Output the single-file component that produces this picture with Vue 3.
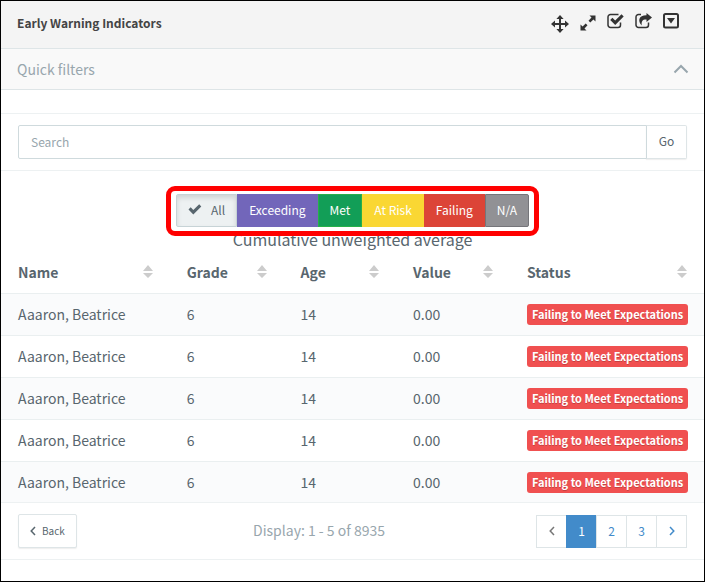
<script setup>
import { ref } from 'vue'

const query = ref('')
const active = ref('All')
const page = ref(1)

const filters = [
  { label: 'All', kind: 'all' },
  { label: 'Exceeding', kind: 'exceeding' },
  { label: 'Met', kind: 'met' },
  { label: 'At Risk', kind: 'risk' },
  { label: 'Failing', kind: 'failing' },
  { label: 'N/A', kind: 'na' }
]
const columns = ['Name', 'Grade', 'Age', 'Value', 'Status']
const rows = Array.from({ length: 5 }, (_, id) => ({
  id,
  name: 'Aaaron, Beatrice',
  grade: '6',
  age: '14',
  value: '0.00',
  status: 'Failing to Meet Expectations'
}))
</script>

<template>
  <main class="widget">
    <header class="title-bar">
      <h1>Early Warning Indicators</h1>
      <div class="tools">
        <button type="button" class="tool low" aria-label="Move">
          <svg width="18" height="18" viewBox="0 0 18 18"><path d="M9 0l3.600 4H10v4h4V5.400L18 9l-4 3.600V10h-4v4h2.600L9 18l-3.600-4H8v-4H4v2.600L0 9l4-3.600V8h4V4H5.400z" /></svg>
        </button>
        <button type="button" class="tool low" aria-label="Expand">
          <svg width="16" height="16" viewBox="0 0 16 16"><path d="M9.500 0.500H15.500V6.500L13.400 4.500 10.300 7.500 8.500 5.700 11.500 2.600zM0.500 9.500L2.600 11.500 5.700 8.500 7.500 10.300 4.500 13.400 6.500 15.500H0.500z" /></svg>
        </button>
        <button type="button" class="tool" aria-label="Select">
          <svg width="17" height="16" viewBox="0 0 17 16"><path class="line" d="M13.500 9.500v2.500a2.500 2.500 0 0 1-2.500 2.500H3.500A2.500 2.500 0 0 1 1 12V4a2.500 2.500 0 0 1 2.500-2.500H11.500" /><path d="M3.200 6.900l2.200-2.200 2.800 2.800 6.300-6.300 2.200 2.200-8.500 8.500z" /></svg>
        </button>
        <button type="button" class="tool" aria-label="Share">
          <svg width="17" height="16" viewBox="0 0 17 16"><path class="line" d="M13.500 9.500v2.500a2.500 2.500 0 0 1-2.500 2.500H3.500A2.500 2.500 0 0 1 1 12V4a2.500 2.500 0 0 1 2.500-2.500H6" /><path d="M11.500 0L17 4.500 11.500 9V6.500C7.500 6.300 6.300 8 6.700 12.500 2.500 8 3.500 2.300 11.500 2.300z" /></svg>
        </button>
        <button type="button" class="tool" aria-label="Menu">
          <svg width="16" height="16" viewBox="0 0 16 16"><rect class="frame" x="1" y="1" width="14" height="13.500" rx="1.500" /><path d="M4 5h8l-4 5.500z" /></svg>
        </button>
      </div>
    </header>

    <button type="button" class="quick" aria-expanded="true">
      <span>Quick filters</span>
      <svg width="16" height="10" viewBox="0 0 16 10"><path d="M1.500 8.500L8 2l6.500 6.500" /></svg>
    </button>

    <form class="search" @submit.prevent>
      <input v-model="query" type="text" placeholder="Search" aria-label="Search" />
      <button type="submit">Go</button>
    </form>

    <section class="filters">
      <div class="highlight" role="group" aria-label="Status filter">
        <button
          v-for="f in filters"
          :key="f.kind"
          type="button"
          :class="['filter', f.kind]"
          :aria-pressed="active === f.label"
          @click="active = f.label"
        >
          <svg v-if="active === f.label" width="14" height="11" viewBox="0 0 14 11"><path d="M0.500 5.500L2.700 3.300 5.300 5.900 11.200 0.300 13.300 2.400 5.300 10.500z" /></svg>
          {{ f.label }}
        </button>
      </div>
      <h2>Cumulative unweighted average</h2>
    </section>

    <table>
      <colgroup>
        <col v-for="c in columns" :key="c" :class="'col-' + c.toLowerCase()" />
      </colgroup>
      <thead>
        <tr>
          <th v-for="c in columns" :key="c" scope="col">
            <div class="head">
              {{ c }}
              <svg width="10" height="14" viewBox="0 0 10 14"><path d="M5 0l5 6H0zM0 8h10l-5 5z" /></svg>
            </div>
          </th>
        </tr>
      </thead>
      <tbody>
        <tr v-for="r in rows" :key="r.id">
          <td>{{ r.name }}</td>
          <td>{{ r.grade }}</td>
          <td>{{ r.age }}</td>
          <td>{{ r.value }}</td>
          <td><span class="badge">{{ r.status }}</span></td>
        </tr>
      </tbody>
    </table>

    <footer>
      <button type="button" class="back">
        <svg width="6" height="10" viewBox="0 0 6 10"><path d="M5 1L1.200 5 5 9" /></svg>
        Back
      </button>
      <p>Display: 1 - 5 of 8935</p>
      <nav aria-label="Pages">
        <button type="button" class="prev" aria-label="Previous">
          <svg width="6" height="10" viewBox="0 0 6 10"><path d="M5 1L1.200 5 5 9" /></svg>
        </button>
        <button
          v-for="n in 3"
          :key="n"
          type="button"
          :class="{ current: page === n }"
          @click="page = n"
        >{{ n }}</button>
        <button type="button" aria-label="Next">
          <svg width="6" height="10" viewBox="0 0 6 10"><path d="M1 1l3.800 4L1 9" /></svg>
        </button>
      </nav>
    </footer>
  </main>
</template>

<style>
body {
  background: #fff;
}
</style>

<style scoped>
* {
  box-sizing: border-box;
}
.widget {
  min-height: 100vh;
  border: 1px solid #000;
  background: #fff;
  color: #58666e;
  font: 14px/20px "Noto Sans CJK SC", "Noto Sans", sans-serif;
}
button,
input {
  margin: 0;
  font: inherit;
  color: inherit;
}
svg {
  display: block;
  flex: none;
}
h1,
h2,
p {
  margin: 0;
}
.title-bar {
  display: flex;
  justify-content: space-between;
  height: 48px;
  padding: 12px 25px 0 16px;
  background: #f4f4f4;
  border-bottom: 1px solid #dee5e7;
}
h1 {
  font-size: 12px;
  line-height: 20px;
  font-weight: 700;
  color: #444;
}
.tools {
  display: flex;
  align-items: flex-start;
  gap: 11px;
}
.tool {
  padding: 0;
  border: 0;
  background: none;
  fill: #333;
}
.tool.low {
  padding-top: 2px;
}
.line,
.frame {
  fill: none;
  stroke: #333;
  stroke-width: 1.5;
}
.frame {
  stroke-width: 2;
}
.quick {
  display: flex;
  align-items: center;
  justify-content: space-between;
  width: 100%;
  height: 41px;
  padding: 0 15px 0 16px;
  border: 0;
  border-bottom: 1px solid #dee5e7;
  background: #f9f9f9;
  color: #98a6ad;
}
.quick svg {
  fill: none;
  stroke: #98a6ad;
  stroke-width: 2;
}
.search {
  display: flex;
  margin-top: 23px;
  padding: 11px 17px;
  border: 1px solid #edf1f2;
  border-width: 1px 0;
}
.search input {
  flex: 1;
  min-width: 0;
  height: 34px;
  padding: 0 12px 2px;
  border: 1px solid #cfdadd;
  border-radius: 2px 0 0 2px;
  font-size: 12px;
}
.search input::placeholder {
  color: #98a6ad;
  opacity: 1;
}
.search button {
  height: 34px;
  width: 41px;
  margin-left: -1px;
  padding: 0 0 2px;
  border: 1px solid #dee5e7;
  border-left-color: #cfdadd;
  border-radius: 0 2px 2px 0;
  background: #fff;
  font-size: 12px;
  box-shadow: 0 1px 1px rgba(90, 90, 90, 0.1);
}
.filters {
  display: flex;
  flex-direction: column;
  align-items: center;
  padding-top: 15px;
}
.highlight {
  display: flex;
  position: relative;
  z-index: 1;
  padding: 3px 5px 4px;
  border: 5px solid #f00;
  border-radius: 9px;
  background: #fff;
}
.filter {
  display: flex;
  align-items: center;
  gap: 9px;
  height: 33px;
  padding: 0 11px 2px;
  border: 1px solid;
  color: #fff;
  font-size: 12px;
}
.all {
  border-color: #c7d3d6;
  border-radius: 2px 0 0 2px;
  background: #edf1f2;
  color: #58666e;
  box-shadow: inset 0 3px 5px rgba(0, 0, 0, 0.125);
}
.filter svg {
  fill: #58666e;
}
.exceeding {
  background: #7266ba;
  border-color: #7266ba;
}
.met {
  background: #129e57;
  border-color: #27b04a;
}
.risk {
  background: #fad733;
  border-color: #fad733;
}
.failing {
  background: #dc4437;
  border-color: #dc4437;
}
.na {
  background: #919195;
  border-color: #75757a;
  border-radius: 0 2px 2px 0;
}
h2 {
  margin-top: -9px;
  font-size: 16px;
  line-height: 24px;
  font-weight: 400;
}
table {
  width: 100%;
  table-layout: fixed;
  border-collapse: separate;
  border-spacing: 0;
}
.col-name {
  width: 24%;
}
.col-grade,
.col-value {
  width: 16.2%;
}
.col-age {
  width: 16%;
}
.col-status {
  width: 27.6%;
}
th,
td {
  padding: 0 0 1px 17px;
  text-align: left;
}
th {
  height: 42px;
  padding: 0 17px 1px;
  font-weight: 700;
}
.head {
  display: flex;
  align-items: center;
  justify-content: space-between;
}
.head svg {
  fill: #ccc;
}
td {
  height: 42px;
  border-top: 1px solid #eaeff0;
  white-space: nowrap;
}
tbody tr:last-child td {
  height: 41px;
}
tbody tr:nth-child(odd) {
  background: #fafbfc;
}
.badge {
  display: inline-block;
  padding: 0 5px;
  border-radius: 3px;
  background: #f05050;
  color: #fff;
  font-size: 11px;
  line-height: 21px;
  font-weight: 700;
  text-shadow: 0 1px 0 rgba(0, 0, 0, 0.2);
  vertical-align: middle;
}
footer {
  display: grid;
  grid-template-columns: 5fr 8fr 7fr;
  align-items: center;
  padding: 11px 17px;
  border: 1px solid #edf1f2;
  border-width: 1px 0;
}
footer svg {
  fill: none;
  stroke: currentColor;
  stroke-width: 1.5;
}
.back {
  justify-self: start;
  display: flex;
  align-items: center;
  gap: 6px;
  height: 34px;
  padding: 0 11px;
  border: 1px solid #dee5e7;
  border-radius: 2px;
  background: #fff;
  font-size: 10px;
  box-shadow: 0 1px 1px rgba(90, 90, 90, 0.1);
}
footer p {
  padding-bottom: 2px;
  color: #98a6ad;
  text-align: center;
}
nav {
  justify-self: end;
  display: flex;
}
nav button {
  display: flex;
  align-items: center;
  justify-content: center;
  width: 31px;
  height: 33px;
  padding: 0;
  margin-left: -1px;
  border: 1px solid #dee5e7;
  background: #fff;
  color: #428bca;
  font-size: 12px;
}
nav .prev {
  color: #777;
}
nav .current {
  border-color: #428bca;
  background: #428bca;
  color: #fff;
}
</style>
